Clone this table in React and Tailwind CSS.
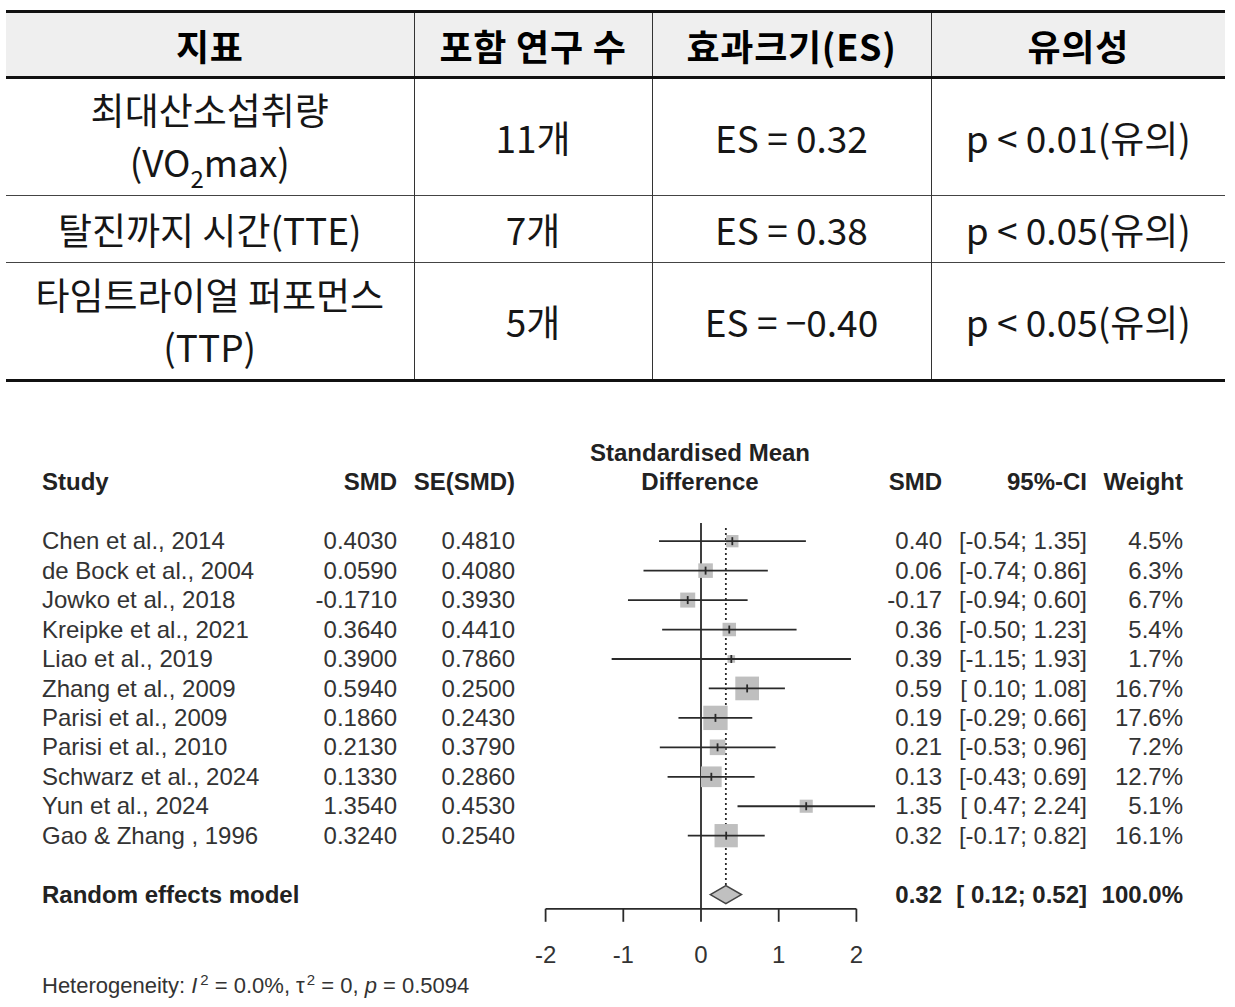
import React from 'react'

const studies = [
  { name: 'Chen et al., 2014', smd: '0.4030', se: '0.4810', v: 0.403, lo: -0.54, hi: 1.35, w: 4.5, s: '0.40', ci: '[-0.54; 1.35]', wt: '4.5%' },
  { name: 'de Bock et al., 2004', smd: '0.0590', se: '0.4080', v: 0.059, lo: -0.74, hi: 0.86, w: 6.3, s: '0.06', ci: '[-0.74; 0.86]', wt: '6.3%' },
  { name: 'Jowko et al., 2018', smd: '-0.1710', se: '0.3930', v: -0.171, lo: -0.94, hi: 0.6, w: 6.7, s: '-0.17', ci: '[-0.94; 0.60]', wt: '6.7%' },
  { name: 'Kreipke et al., 2021', smd: '0.3640', se: '0.4410', v: 0.364, lo: -0.5, hi: 1.23, w: 5.4, s: '0.36', ci: '[-0.50; 1.23]', wt: '5.4%' },
  { name: 'Liao et al., 2019', smd: '0.3900', se: '0.7860', v: 0.39, lo: -1.15, hi: 1.93, w: 1.7, s: '0.39', ci: '[-1.15; 1.93]', wt: '1.7%' },
  { name: 'Zhang et al., 2009', smd: '0.5940', se: '0.2500', v: 0.594, lo: 0.1, hi: 1.08, w: 16.7, s: '0.59', ci: '[ 0.10; 1.08]', wt: '16.7%' },
  { name: 'Parisi et al., 2009', smd: '0.1860', se: '0.2430', v: 0.186, lo: -0.29, hi: 0.66, w: 17.6, s: '0.19', ci: '[-0.29; 0.66]', wt: '17.6%' },
  { name: 'Parisi et al., 2010', smd: '0.2130', se: '0.3790', v: 0.213, lo: -0.53, hi: 0.96, w: 7.2, s: '0.21', ci: '[-0.53; 0.96]', wt: '7.2%' },
  { name: 'Schwarz et al., 2024', smd: '0.1330', se: '0.2860', v: 0.133, lo: -0.43, hi: 0.69, w: 12.7, s: '0.13', ci: '[-0.43; 0.69]', wt: '12.7%' },
  { name: 'Yun et al., 2024', smd: '1.3540', se: '0.4530', v: 1.354, lo: 0.47, hi: 2.24, w: 5.1, s: '1.35', ci: '[ 0.47; 2.24]', wt: '5.1%' },
  { name: 'Gao & Zhang , 1996', smd: '0.3240', se: '0.2540', v: 0.324, lo: -0.17, hi: 0.82, w: 16.1, s: '0.32', ci: '[-0.17; 0.82]', wt: '16.1%' },
]

const ROW = 29.45
const X = (v) => 186 + 77.7 * v
const rowY = (i) => (i + 1) * ROW + ROW / 2

const ForestSvg = () => {
  const axisY = 411.8
  const reY = rowY(12)
  return (
    <svg width="370" height={16 * ROW} className="block overflow-visible">
      <line x1={X(0)} y1="26" x2={X(0)} y2={axisY} stroke="#2a2a2a" strokeWidth="1.8" />
      <line x1={X(0.32)} y1="31" x2={X(0.32)} y2={reY - 9} stroke="#2a2a2a" strokeWidth="1.8" strokeDasharray="2 3" />
      {studies.map((d, i) => {
        const y = rowY(i)
        const size = 5.8 * Math.sqrt(d.w)
        return (
          <g key={i}>
            <rect x={X(d.v) - size / 2} y={y - size / 2} width={size} height={size} fill="#bfbfbf" />
            <line x1={X(d.lo)} y1={y} x2={X(d.hi)} y2={y} stroke="#2a2a2a" strokeWidth="1.8" />
            <line x1={X(d.v)} y1={y - 4} x2={X(d.v)} y2={y + 4} stroke="#2a2a2a" strokeWidth="1.8" />
          </g>
        )
      })}
      <polygon
        points={`${X(0.12)},${reY} ${X(0.32)},${reY - 9} ${X(0.52)},${reY} ${X(0.32)},${reY + 9}`}
        fill="#c0c0c0"
        stroke="#444"
        strokeWidth="1.6"
      />
      <line x1={X(-2)} y1={axisY} x2={X(2)} y2={axisY} stroke="#2a2a2a" strokeWidth="1.8" />
      {[-2, -1, 0, 1, 2].map((t) => (
        <g key={t}>
          <line x1={X(t)} y1={axisY} x2={X(t)} y2={axisY + 13} stroke="#2a2a2a" strokeWidth="1.8" />
          <text x={X(t)} y="466" textAnchor="middle" fontSize="24" fill="#333" fontFamily="Liberation Sans, Arial, sans-serif">
            {t}
          </text>
        </g>
      ))}
    </svg>
  )
}

const Row = ({ className = '', children }) => (
  <div className={`h-[29.45px] leading-[29.45px] whitespace-pre ${className}`}>{children}</div>
)

const ForestPlot = () => {
  const leftCols = 'grid grid-cols-[255px_100px_118px]'
  const rightCols = 'grid grid-cols-[57px_145px_96px]'
  return (
    <div className="mt-[56px] flex pl-[42px] text-[24px] text-[#333] font-['Liberation_Sans',Arial,sans-serif]">
      <div className="w-[473px]">
        <Row />
        <Row className={`${leftCols} font-bold text-[#222]`}>
          <span>Study</span>
          <span className="text-right">SMD</span>
          <span className="text-right">SE(SMD)</span>
        </Row>
        <Row />
        {studies.map((d) => (
          <Row key={d.name} className={leftCols}>
            <span>{d.name}</span>
            <span className="text-right">{d.smd}</span>
            <span className="text-right">{d.se}</span>
          </Row>
        ))}
        <Row />
        <Row className="font-bold text-[#222]">Random effects model</Row>
        <Row />
        <Row />
        <Row className="pt-[3px] text-[22px]">
          Heterogeneity: <i>I</i>
          <sup className="text-[15px] ml-[3px]">2</sup> = 0.0%, τ<sup className="text-[15px] ml-[2px]">2</sup> = 0, <i>p</i> = 0.5094
        </Row>
      </div>
      <div className="w-[370px]">
        <Row className="text-center font-bold text-[#222]">Standardised Mean</Row>
        <Row className="text-center font-bold text-[#222]">Difference</Row>
        <ForestSvg />
      </div>
      <div className="w-[298px]">
        <Row />
        <Row className={`${rightCols} font-bold text-[#222]`}>
          <span className="text-right">SMD</span>
          <span className="text-right">95%-CI</span>
          <span className="text-right">Weight</span>
        </Row>
        <Row />
        {studies.map((d) => (
          <Row key={d.name} className={rightCols}>
            <span className="text-right">{d.s}</span>
            <span className="text-right">{d.ci}</span>
            <span className="text-right">{d.wt}</span>
          </Row>
        ))}
        <Row />
        <Row className={`${rightCols} font-bold text-[#222]`}>
          <span className="text-right">0.32</span>
          <span className="text-right">{'[ 0.12; 0.52]'}</span>
          <span className="text-right">100.0%</span>
        </Row>
      </div>
    </div>
  )
}

const SummaryTable = () => {
  const th = 'font-bold text-[36px] text-black tracking-[0.02em]'
  const td = 'text-[37px] leading-[52px] text-[#161616] font-normal'
  const sep = 'border-l-[1.5px] border-[#333]'
  return (
    <table className="ml-[6px] mt-[9px] w-[1219px] table-fixed border-collapse text-center font-['Noto_Sans_CJK_KR','Noto_Sans',sans-serif]">
      <colgroup>
        <col className="w-[408px]" />
        <col className="w-[238px]" />
        <col className="w-[279px]" />
        <col className="w-[294px]" />
      </colgroup>
      <thead>
        <tr className="h-[66px] bg-[#efefef] border-t-[3px] border-b-[3px] border-[#111]">
          <th className={th}>지표</th>
          <th className={`${th} ${sep}`}>포함 연구 수</th>
          <th className={`${th} ${sep}`}>효과크기(ES)</th>
          <th className={`${th} ${sep}`}>유의성</th>
        </tr>
      </thead>
      <tbody>
        <tr className="h-[118px] border-b-[1.5px] border-[#444]">
          <td className={`${td} pb-[4px]`}>
            최대산소섭취량
            <br />
            (VO<sub className="text-[24px] align-[-5px]">2</sub>max)
          </td>
          <td className={`${td} ${sep}`}>11개</td>
          <td className={`${td} ${sep}`}>ES = 0.32</td>
          <td className={`${td} ${sep}`}>p &lt; 0.01(유의)</td>
        </tr>
        <tr className="h-[67px] border-b-[1.5px] border-[#444]">
          <td className={td}>탈진까지 시간(TTE)</td>
          <td className={`${td} ${sep}`}>7개</td>
          <td className={`${td} ${sep}`}>ES = 0.38</td>
          <td className={`${td} ${sep}`}>p &lt; 0.05(유의)</td>
        </tr>
        <tr className="h-[118px] border-b-[3px] border-[#111]">
          <td className={`${td} pb-[2px]`}>
            타임트라이얼 퍼포먼스
            <br />
            (TTP)
          </td>
          <td className={`${td} ${sep}`}>5개</td>
          <td className={`${td} ${sep}`}>ES = −0.40</td>
          <td className={`${td} ${sep}`}>p &lt; 0.05(유의)</td>
        </tr>
      </tbody>
    </table>
  )
}

export default function App() {
  return (
    <div className="w-[1235px] h-[1007px] bg-white overflow-hidden pt-px">
      <SummaryTable />
      <ForestPlot />
    </div>
  )
}
